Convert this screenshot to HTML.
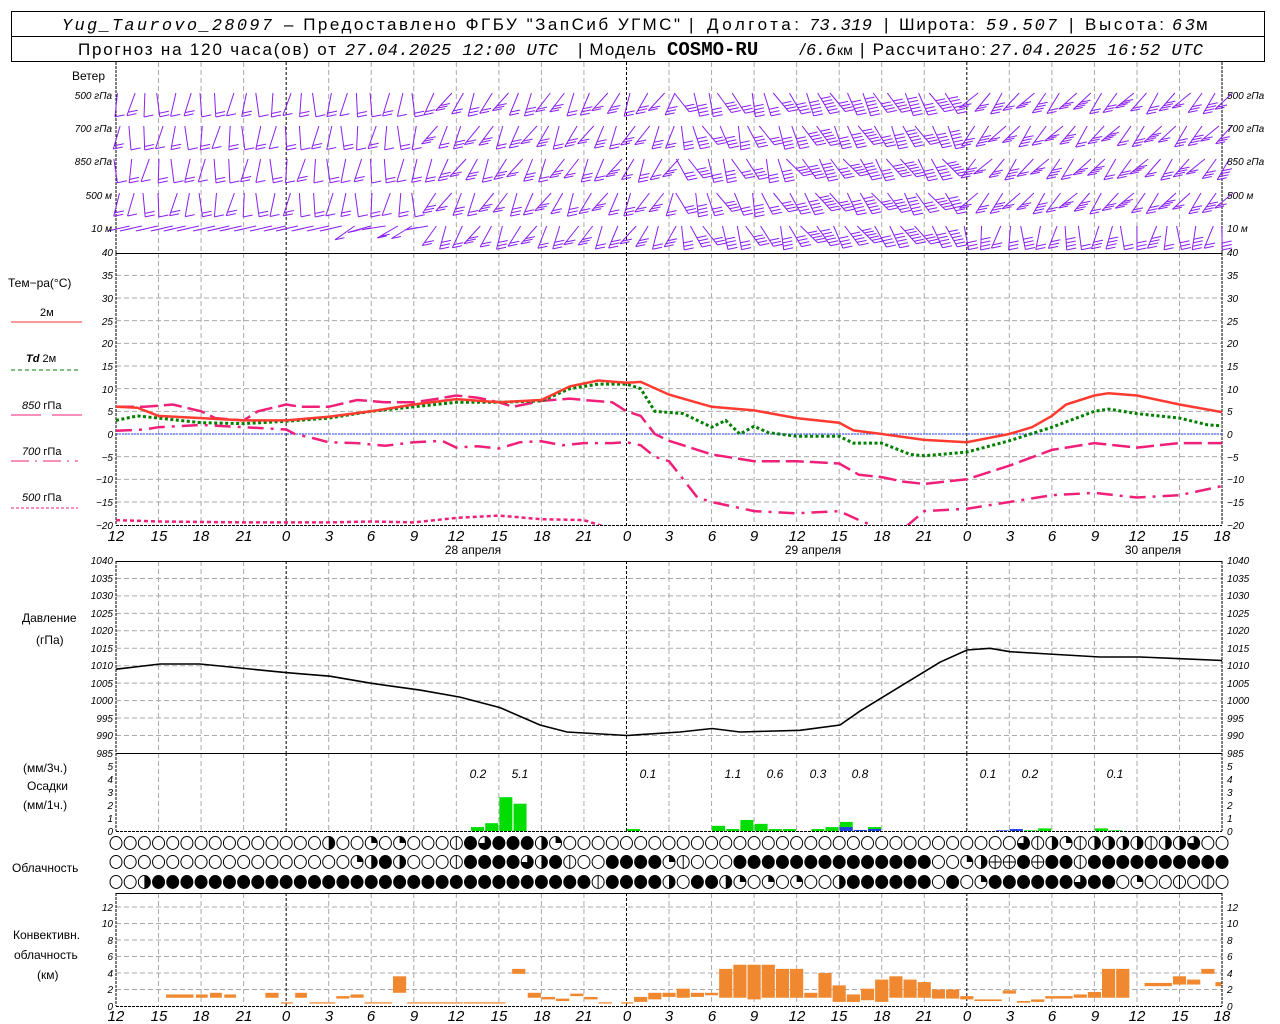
<!DOCTYPE html>
<html><head><meta charset="utf-8"><style>
html,body{margin:0;padding:0;background:#fff;width:1280px;height:1024px;overflow:hidden}
svg{display:block}
text{font-family:"Liberation Sans",sans-serif;fill:#000}
.ax{font-size:10px;font-style:italic}
.hl{font-size:15px;font-style:italic}
.lb{font-size:12px}
.hd{font-size:17px}
.it{font-style:italic}
</style></head><body>
<svg id="s" width="1280" height="1024" xmlns="http://www.w3.org/2000/svg">
<rect x="0" y="0" width="1280" height="1024" fill="#fff"/>
<rect x="11.5" y="11.5" width="1253" height="50" fill="none" stroke="#000"/>
<line x1="11" y1="36.5" x2="1265" y2="36.5" stroke="#000"/>
<g class="hd">
<text x="62" y="30" class="it" textLength="210" style="font-family:'Liberation Mono',monospace">Yug_Taurovo_28097</text>
<text x="284" y="30" textLength="396">– Предоставлено ФГБУ "ЗапСиб УГМС"</text>
<text x="689" y="30">|</text>
<text x="707" y="30" textLength="92">Долгота:</text>
<text x="809" y="30" class="it" textLength="63" style="font-family:'Liberation Mono',monospace">73.319</text>
<text x="884" y="30">|</text>
<text x="899" y="30" textLength="76">Широта:</text>
<text x="986" y="30" class="it" textLength="71" style="font-family:'Liberation Mono',monospace">59.507</text>
<text x="1069" y="30">|</text>
<text x="1085" y="30" textLength="79">Высота:</text>
<text x="1172" y="30" class="it" style="font-family:'Liberation Mono',monospace" textLength="23">63</text>
<text x="1196" y="30" textLength="12">м</text>
<text x="78" y="55" textLength="258">Прогноз на 120 часа(ов) от</text>
<text x="345" y="55" class="it" textLength="213" style="font-family:'Liberation Mono',monospace">27.04.2025 12:00 UTC</text>
<text x="578" y="55" textLength="78">| Модель</text>
<text x="667" y="55" style="font-family:'Liberation Mono',monospace;font-weight:bold;font-size:19px">COSMO-RU</text>
<text x="800" y="55" class="it">/</text>
<text x="806" y="55" class="it" textLength="30" style="font-family:'Liberation Mono',monospace">6.6</text>
<text x="837" y="55" font-size="14">км</text>
<text x="860" y="55" textLength="126">| Рассчитано:</text>
<text x="990" y="55" class="it" textLength="213" style="font-family:'Liberation Mono',monospace">27.04.2025 16:52 UTC</text>
</g>
<g id="grid"></g>
<g id="data"></g>
<g class="lb">
<text x="72" y="80">Ветер</text>
<g class="ax" font-size="10" text-anchor="end">
<text x="112" y="99">500 гПа</text><text x="112" y="132">700 гПа</text><text x="112" y="165">850 гПа</text><text x="112" y="199">500 м</text><text x="112" y="232">10 м</text>
</g>
<g class="ax" font-size="10">
<text x="1227" y="99">500 гПа</text><text x="1227" y="132">700 гПа</text><text x="1227" y="165">850 гПа</text><text x="1227" y="199">500 м</text><text x="1227" y="232">10 м</text>
</g>
<text x="8" y="287">Тем−ра(°C)</text>
<text x="40" y="316" font-size="11">2м</text>
<line x1="11" y1="322" x2="82" y2="322" stroke="#ff3030" stroke-width="1"/>
<text x="26" y="362" font-size="11"><tspan class="it" font-weight="bold">Td</tspan>  2м</text>
<line x1="11" y1="370" x2="78" y2="370" stroke="#008000" stroke-dasharray="4 3"/>
<text x="22" y="409" font-size="11"><tspan class="it">850</tspan> гПа</text>
<line x1="11" y1="415" x2="41" y2="415" stroke="#f0207a"/><line x1="52" y1="415" x2="82" y2="415" stroke="#f0207a"/>
<text x="22" y="455" font-size="11"><tspan class="it">700</tspan> гПа</text>
<line x1="11" y1="461" x2="78" y2="461" stroke="#f0207a" stroke-dasharray="18 6 2 6"/>
<text x="22" y="501" font-size="11"><tspan class="it">500</tspan> гПа</text>
<line x1="11" y1="508" x2="78" y2="508" stroke="#f0207a" stroke-dasharray="3 2"/>
<text x="22" y="622">Давление</text>
<text x="36" y="644">(гПа)</text>
<text x="23" y="772">(мм/3ч.)</text>
<text x="27" y="790">Осадки</text>
<text x="23" y="809">(мм/1ч.)</text>
<text x="12" y="872">Облачность</text>
<text x="13" y="939">Конвективн.</text>
<text x="14" y="959">облачность</text>
<text x="37" y="979">(км)</text>
</g>
<g class="lb it" font-size="13">
<text x="478" y="778" text-anchor="middle">0.2</text><text x="520" y="778" text-anchor="middle">5.1</text><text x="648" y="778" text-anchor="middle">0.1</text><text x="733" y="778" text-anchor="middle">1.1</text><text x="775" y="778" text-anchor="middle">0.6</text><text x="818" y="778" text-anchor="middle">0.3</text><text x="860" y="778" text-anchor="middle">0.8</text><text x="988" y="778" text-anchor="middle">0.1</text><text x="1030" y="778" text-anchor="middle">0.2</text><text x="1115" y="778" text-anchor="middle">0.1</text>
</g>
<g class="lb" font-size="13">
<text x="473" y="554" text-anchor="middle">28 апреля</text>
<text x="813" y="554" text-anchor="middle">29 апреля</text>
<text x="1153" y="554" text-anchor="middle">30 апреля</text>
</g>
<g class="hl" text-anchor="middle">
<text x="116" y="541">12</text><text x="159" y="541">15</text><text x="201" y="541">18</text><text x="244" y="541">21</text><text x="286" y="541">0</text><text x="329" y="541">3</text><text x="371" y="541">6</text><text x="414" y="541">9</text><text x="456" y="541">12</text><text x="499" y="541">15</text><text x="542" y="541">18</text><text x="584" y="541">21</text><text x="627" y="541">0</text><text x="669" y="541">3</text><text x="712" y="541">6</text><text x="754" y="541">9</text><text x="797" y="541">12</text><text x="839" y="541">15</text><text x="882" y="541">18</text><text x="924" y="541">21</text><text x="967" y="541">0</text><text x="1010" y="541">3</text><text x="1052" y="541">6</text><text x="1095" y="541">9</text><text x="1137" y="541">12</text><text x="1180" y="541">15</text><text x="1222" y="541">18</text>
</g>
<g class="hl" text-anchor="middle">
<text x="116" y="1021">12</text><text x="159" y="1021">15</text><text x="201" y="1021">18</text><text x="244" y="1021">21</text><text x="286" y="1021">0</text><text x="329" y="1021">3</text><text x="371" y="1021">6</text><text x="414" y="1021">9</text><text x="456" y="1021">12</text><text x="499" y="1021">15</text><text x="542" y="1021">18</text><text x="584" y="1021">21</text><text x="627" y="1021">0</text><text x="669" y="1021">3</text><text x="712" y="1021">6</text><text x="754" y="1021">9</text><text x="797" y="1021">12</text><text x="839" y="1021">15</text><text x="882" y="1021">18</text><text x="924" y="1021">21</text><text x="967" y="1021">0</text><text x="1010" y="1021">3</text><text x="1052" y="1021">6</text><text x="1095" y="1021">9</text><text x="1137" y="1021">12</text><text x="1180" y="1021">15</text><text x="1222" y="1021">18</text>
</g>
<g class="ax" text-anchor="end">
<text x="113" y="256">40</text><text x="113" y="279">35</text><text x="113" y="302">30</text><text x="113" y="325">25</text><text x="113" y="347">20</text><text x="113" y="370">15</text><text x="113" y="393">10</text><text x="113" y="415">5</text><text x="113" y="438">0</text><text x="113" y="461">−5</text><text x="113" y="483">−10</text><text x="113" y="506">−15</text><text x="113" y="529">−20</text>
<text x="113" y="564">1040</text><text x="113" y="582">1035</text><text x="113" y="599">1030</text><text x="113" y="617">1025</text><text x="113" y="634">1020</text><text x="113" y="652">1015</text><text x="113" y="669">1010</text><text x="113" y="687">1005</text><text x="113" y="704">1000</text><text x="113" y="722">995</text><text x="113" y="739">990</text><text x="113" y="757">985</text>
<text x="113" y="770">5</text><text x="113" y="783">4</text><text x="113" y="796">3</text><text x="113" y="809">2</text><text x="113" y="822">1</text><text x="113" y="835">0</text>
<text x="113" y="911">12</text><text x="113" y="927">10</text><text x="113" y="944">8</text><text x="113" y="960">6</text><text x="113" y="977">4</text><text x="113" y="993">2</text><text x="113" y="1010">0</text>
</g>
<g class="ax">
<text x="1227" y="256">40</text><text x="1227" y="279">35</text><text x="1227" y="302">30</text><text x="1227" y="325">25</text><text x="1227" y="347">20</text><text x="1227" y="370">15</text><text x="1227" y="393">10</text><text x="1227" y="415">5</text><text x="1227" y="438">0</text><text x="1227" y="461">−5</text><text x="1227" y="483">−10</text><text x="1227" y="506">−15</text><text x="1227" y="529">−20</text>
<text x="1227" y="564">1040</text><text x="1227" y="582">1035</text><text x="1227" y="599">1030</text><text x="1227" y="617">1025</text><text x="1227" y="634">1020</text><text x="1227" y="652">1015</text><text x="1227" y="669">1010</text><text x="1227" y="687">1005</text><text x="1227" y="704">1000</text><text x="1227" y="722">995</text><text x="1227" y="739">990</text><text x="1227" y="757">985</text>
<text x="1227" y="770">5</text><text x="1227" y="783">4</text><text x="1227" y="796">3</text><text x="1227" y="809">2</text><text x="1227" y="822">1</text><text x="1227" y="835">0</text>
<text x="1227" y="911">12</text><text x="1227" y="927">10</text><text x="1227" y="944">8</text><text x="1227" y="960">6</text><text x="1227" y="977">4</text><text x="1227" y="993">2</text><text x="1227" y="1010">0</text>
</g>
</svg>
<script>
(function(){
var NS="http://www.w3.org/2000/svg";
var G=document.getElementById('grid'),D=document.getElementById('data');
function el(p,t,a){var e=document.createElementNS(NS,t);for(var k in a)e.setAttribute(k,a[k]);p.appendChild(e);return e;}
function X(h){return 116+h*14.18;}
function TY(t){return 434-t*4.533;}
function PY(p){return 561+(1040-p)*3.49;}
var L=116,R=1222;
var panels=[[62,253,[]],[253,525,[]],[561,753,[]],[753,831,[]],[893,1006,[]]];
for(var t=35;t>-20;t-=5)panels[1][2].push(TY(t));
for(var p=1035;p>985;p-=5)panels[2][2].push(PY(p));
for(var k=2;k<=12;k+=2)panels[4][2].push(1006-k*8.25);
panels.forEach(function(pn){
 pn[2].forEach(function(y){el(G,'line',{x1:L,x2:R,y1:y,y2:y,stroke:'#aaa','stroke-dasharray':'5 3'});});
 for(var h=3;h<78;h+=3){var x=X(h);var mid=(h%24==12);
  el(G,'line',{x1:x,x2:x,y1:pn[0],y2:pn[1],stroke:mid?'#000':'#aaa','stroke-dasharray':mid?'3 2':'5 3'});}
 el(G,'line',{x1:L,x2:L,y1:pn[0],y2:pn[1],stroke:'#000','stroke-dasharray':'3 1'});
 el(G,'line',{x1:R,x2:R,y1:pn[0],y2:pn[1],stroke:'#000','stroke-dasharray':'3 1'});
});
[253,561,753,893].forEach(function(y){el(G,'line',{x1:L,x2:R,y1:y+.5,y2:y+.5,stroke:'#000'});});
[525,1006,831].forEach(function(y){el(G,'line',{x1:L,x2:R,y1:y+.5,y2:y+.5,stroke:'#000','stroke-dasharray':'3 1'});});
el(G,'line',{x1:L,x2:R,y1:434,y2:434,stroke:'#2040ff','stroke-dasharray':'2 1'});
var rows=[95,128,161,195,228];var wc='#8a1ff0';
var wp=[];
for(var r=0;r<5;r++){for(var h=0;h<=78;h++){
 var yr=rows[r],x=X(h);
 var n,ang;
 var s=Math.sin(h*1.7+r*2.3);
 if(h<22){n=1+((h+r)%2);ang=0.25*s+(r==4?1.2:0.1);}
 else if(h<40){n=2+((h+r)%2);ang=0.5+0.25*s;}
 else if(h<48){n=3+((h)%2);ang=-0.4+0.3*s;}
 else if(h<60){n=4+(h%3);ang=(r<2?-0.5:-0.6)+0.2*s;}
 else {n=2+((h+r)%3);ang=0.7+0.2*s;if(r==4)ang=0.1+0.3*s;}
 var len=24;
 var dx=Math.sin(ang)*len,dy=Math.cos(ang)*len;
 var x0=x+dx*0.6,y0=yr-2,x1=x0-dx,y1=y0+dy;
 if(r==4&&h<16){x1=x0-22;y1=yr+3;}
 var d='M'+x0.toFixed(1)+' '+y0.toFixed(1)+'L'+x1.toFixed(1)+' '+y1.toFixed(1);
 var ux=(x0-x1)/len,uy=(y0-y1)/len;
 for(var i=0;i<n;i++){var bx=x1+ux*i*3.5,by=y1+uy*i*3.5;
  d+='M'+bx.toFixed(1)+' '+by.toFixed(1)+'l9.5 -2';}
 wp.push(d);
}}
el(D,'path',{d:wp.join(''),stroke:wc,fill:'none','stroke-width':1});
var cp=el(D,'clipPath',{id:'ct'});el(cp,'rect',{x:116,y:253,width:1106,height:272});
var TG=el(D,'g',{'clip-path':'url(#ct)'});
function tline(pts,st){var d=pts.map(function(p,i){return (i?'L':'M')+X(p[0]).toFixed(1)+' '+TY(p[1]).toFixed(1);}).join('');var a={d:d,fill:'none'};for(var k in st)a[k]=st[k];el(TG,'path',a);}
var mag='#f0207a';
tline([[0,-19],[3,-19.3],[9,-19.5],[15,-19.5],[18,-19.3],[21,-19.5],[24,-18.5],[27,-18],[30,-18.8],[33,-19],[34.5,-20.5]],{stroke:mag,'stroke-width':2.5,'stroke-dasharray':'4 3'});
tline([[0,0.7],[2,1],[3,1.5],[6,2],[9,1.5],[12,1],[12.6,0],[14,-1],[15,-1.8],[17,-2],[19,-2.6],[21,-1.8],[23,-1.5],[24,-3],[25.5,-2.7],[27,-3.2],[28.5,-1.8],[30,-1.6],[31.5,-2.5],[33,-2],[35,-2],[36,-1.8],[37,-2.5],[38,-5],[39,-6],[40,-10],[41,-14],[42,-15],[45,-17],[48,-17.5],[51,-17],[52.4,-19],[54,-21],[55.5,-21],[57,-17],[60,-16.5],[63,-15],[66,-13.5],[69,-13],[72,-14],[75,-13.5],[78,-11.5]],{stroke:mag,'stroke-width':2.5,'stroke-dasharray':'16 7 3 7'});
tline([[0,6],[2,6],[4,6.5],[6,5],[7,3.5],[9,3],[10,5],[12,6.5],[13,6],[15,6],[17,7.5],[19,7],[21,7],[22.5,7.7],[24,8.5],[25.5,8],[27,7],[28,6],[30,7.3],[32,7.8],[33,7.5],[35,7],[36,5],[37,4],[38,0],[39,-1.5],[40.5,-3],[42,-4.5],[45,-6],[48,-6],[51,-6.5],[52.4,-9],[54,-9.5],[55.5,-10.5],[57,-11],[60,-10],[63,-7],[66,-3.5],[69,-2],[72,-3],[75,-2],[78,-2]],{stroke:mag,'stroke-width':2.5,'stroke-dasharray':'18 6'});
tline([[0,3],[1.5,4],[3,3.5],[6,2.5],[9,2.3],[12,2.8],[15,3.5],[18,5],[21,6],[24,7],[27,7],[30,7.3],[32,10],[34,11],[36,11],[37,10],[38,5],[40,4.5],[42,1.5],[43,3],[44,0],[45,1.7],[46,0.3],[48,-0.5],[51,-0.5],[52,-2],[54,-2],[56,-4.5],[57,-4.8],[60,-4],[63,-1.5],[66,1.5],[69,5],[70,5.5],[72,4.5],[75,3.5],[77,2],[78,1.8]],{stroke:'#008000','stroke-width':3,'stroke-dasharray':'3 2.5'});
tline([[0,6],[1.5,5.8],[3,4],[6,3.5],[9,3],[12,3],[15,3.8],[18,5],[21,6.5],[24,7.7],[27,7],[30,7.5],[32,10.5],[34,11.8],[36,11.3],[37,11.5],[39,8.7],[42,6],[45,5.2],[48,3.5],[51,2.5],[52,0.8],[54,0],[57,-1.3],[60,-1.8],[63,0],[64.6,1.5],[66,4],[67,6.5],[69,8.5],[70,9],[72,8.5],[75,6.5],[78,4.8]],{stroke:'#ff3a30','stroke-width':2.5});
var pr=[[116,1009],[160,1010.5],[200,1010.5],[287,1008],[330,1007],[370,1005],[420,1003],[460,1001],[500,998],[540,993],[567,991],[627,990],[680,991],[712,992],[740,991],[800,991.5],[840,993],[860,997],[900,1004],[940,1011],[967,1014.5],[990,1015],[1010,1014],[1040,1013.5],[1100,1012.5],[1140,1012.5],[1180,1012],[1222,1011.5]];
el(D,'path',{d:pr.map(function(p,i){return (i?'L':'M')+p[0]+' '+PY(p[1]).toFixed(1);}).join(''),stroke:'#000','stroke-width':1.6,fill:'none'});
var pg=[[25,.3],[26,.6],[27,2.6],[28,2.1],[36,.15],[42,.4],[43,.15],[44,.85],[45,.55],[46,.15],[47,.15],[49,.15],[50,.3],[51,.7],[53,.3],[64,.05],[65,.2],[69,.2],[70,.05]];
pg.forEach(function(b){var y=831-b[1]*13;el(D,'rect',{x:X(b[0])+.5,y:y,width:13,height:831-y,fill:'#00dd00'});});
[[51,.3],[52,.08],[53,.15],[62,.05],[63,.15]].forEach(function(b){var y=831-b[1]*13;el(D,'rect',{x:X(b[0])+.5,y:y,width:13,height:831-y,fill:'#2040e0'});});
var rowsC=[
"ooooooooooooooohooqoqooovxtxxxhqooooooooooooooooooooooooooooooootvhqvhhhhvhhtoo",
"oooooooooooooooooqhxhooovxxxxthxvooxxxxqvoooxxxxxxxxxxxxxxooqheexexxvxxxxxxxxxxx",
"oohxxxxxxxxxxxxxxxxxxxxxxxxxxxxxxxvxxxxhoxxhqoqoqoohxxxxxxoxoqxxxxxxtxxoqoovovoox"];
var cy=[843,862,882];
rowsC.forEach(function(s,ri){for(var h=0;h<=78;h++){var c=s[h]||'o';var x=X(h),y=cy[ri],rx=6,ry=6.5;
 var g=el(D,'g',{});
 el(g,'ellipse',{cx:x,cy:y,rx:rx,ry:ry,fill:c=='x'?'#000':'#fff',stroke:'#000','stroke-width':1});
 if(c=='h')el(g,'path',{d:'M'+x+' '+(y-ry)+'A'+rx+' '+ry+' 0 0 1 '+x+' '+(y+ry)+'Z',fill:'#000'});
 if(c=='q')el(g,'path',{d:'M'+x+' '+y+'L'+x+' '+(y-ry)+'A'+rx+' '+ry+' 0 0 1 '+(x+rx)+' '+y+'Z',fill:'#000'});
 if(c=='t')el(g,'path',{d:'M'+x+' '+y+'L'+x+' '+(y-ry)+'A'+rx+' '+ry+' 0 1 1 '+(x-rx)+' '+y+'Z',fill:'#000'});
 if(c=='v')el(g,'line',{x1:x,x2:x,y1:y-ry,y2:y+ry,stroke:'#000'});
 if(c=='e'){el(g,'line',{x1:x,x2:x,y1:y-ry,y2:y+ry,stroke:'#000'});el(g,'line',{x1:x-rx,x2:x+rx,y1:y,y2:y,stroke:'#000'});}
}});
var cv=[[3.5,5.5,1,1.4],[5.6,6.5,1,1.4],[6.6,7.5,1,1.6],[7.6,8.5,1,1.4],[10.5,11.5,1,1.6],[11.6,12.5,.3,.45],[12.6,13.5,1,1.6],[13.6,15.5,.3,.45],[15.5,16.5,.9,1.2],[16.5,17.5,1,1.4],[17.5,19.5,.3,.45],[19.5,20.5,1.6,3.6],[20.5,24.5,.3,.45],[24.5,27.5,.3,.45],[27.9,28.9,3.9,4.5],[29,30,1,1.6],[30,31,.8,1.1],[31,32,.6,.9],[32,33,1.2,1.5],[33,34,.8,1.1],[34,35,.3,.45],[35.6,36.5,.3,.45],[36.5,37.5,.5,1.1],[37.5,38.5,.8,1.6],[38.5,39.5,1.1,1.6],[39.5,40.5,1,2.1],[40.5,41.5,1.1,1.6],[41.5,42.5,1.3,1.6],[42.5,43.5,1,4.5],[43.5,44.5,1,5],[44.5,45.5,.8,5],[45.5,46.5,1,5],[46.5,47.5,1,4.5],[47.5,48.5,1,4.5],[48.5,49.5,1,1.6],[49.5,50.5,1,4],[50.5,51.5,.5,2.5],[51.5,52.5,.5,1.4],[52.5,53.5,.7,2.1],[53.5,54.5,.5,3.2],[54.5,55.5,1,3.6],[55.5,56.5,1,3.2],[56.5,57.5,1,2.9],[57.5,58.5,.9,2],[58.5,59.5,.9,2],[59.5,60.5,.8,1.2],[60.5,62.5,.6,.8],[62.5,63.5,1.5,1.9],[63.5,64.5,.4,.6],[64.5,65.5,.5,.8],[65.5,67.5,.9,1.2],[67.5,68.5,1,1.4],[68.5,69.5,1,1.7],[69.5,70.5,1,4.5],[70.5,71.5,1,4.5],[72.5,74.5,2.4,2.8],[74.5,75.5,2.6,3.6],[75.5,76.5,2.6,3.2],[76.5,77.5,3.9,4.5],[77.5,78,2.4,2.9]];
cv.forEach(function(b){var x0=X(b[0]),x1=X(b[1]),y0=1006-b[3]*8.25,y1=1006-b[2]*8.25;
 el(D,'rect',{x:x0+.5,y:y0,width:x1-x0-1,height:Math.max(1,y1-y0),fill:'#f08830'});});
})();
</script>
</body></html>
